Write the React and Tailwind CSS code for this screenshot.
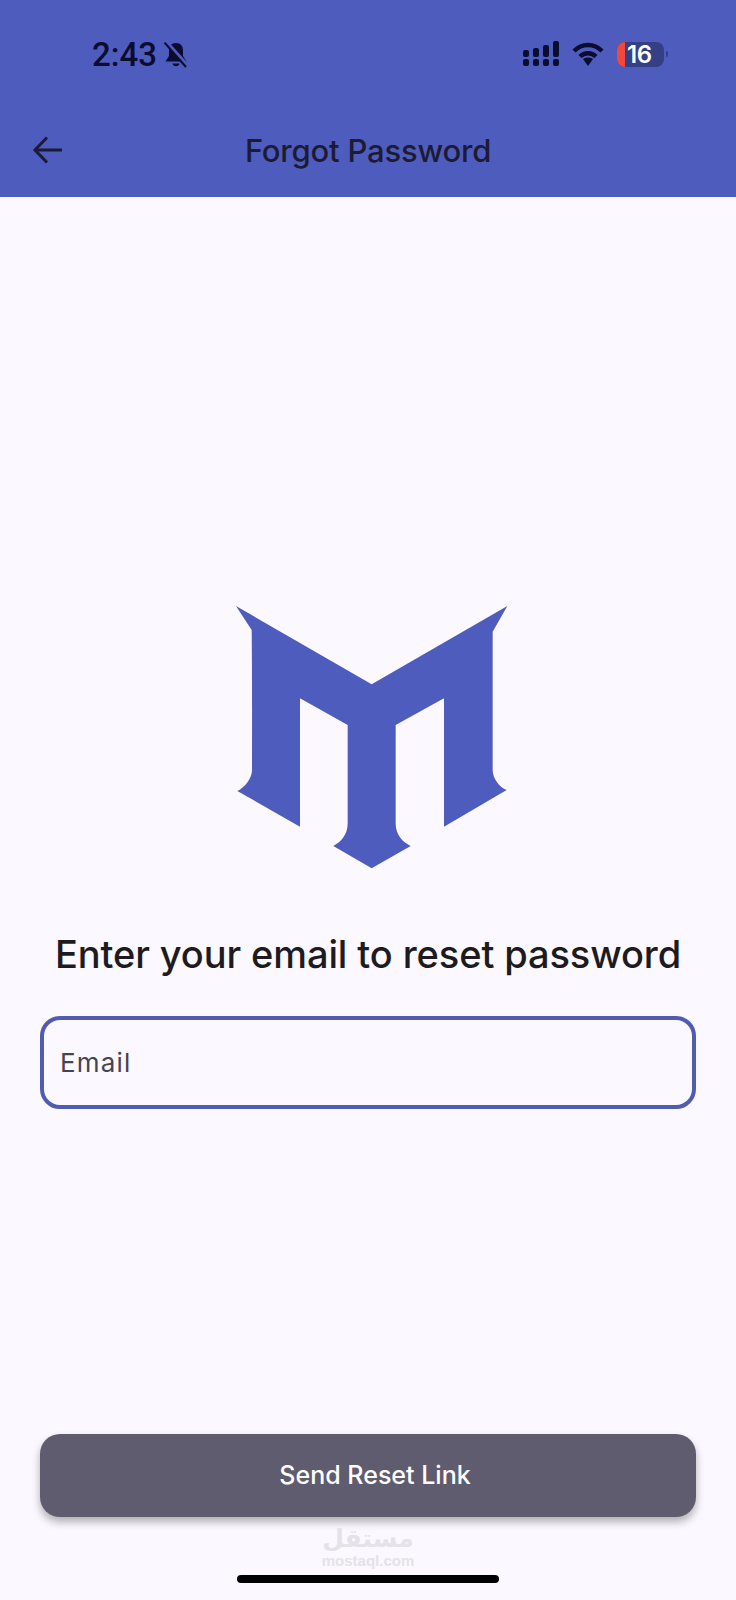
const LOGO = "M48 48 L95 120 C97 300 96 450 96 540 C96 565 75 592 52 603 L240 710 L240 325 L383 405 L383 700 C383 735 362 757 340 768 L455 835 L572 768 C548 757 527 735 527 700 L527 405 L672 325 L672 710 L860 600 C838 592 818 565 818 540 L818 125 L862 48 L455 283 Z";

function Bell() {
  return (
    <svg width="26" height="26" viewBox="0 0 26 26" className="ml-[6px] mt-[1px]">
      <path d="M13 1c-4.800 0-7 3.200-7 7.500v5.500L2.500 19.500h21L20 14V8.500C20 4.200 17.800 1 13 1z" fill="#0b0d30" />
      <path d="M9.500 21.500a3.600 3.600 0 0 0 7 0z" fill="#0b0d30" />
      <path d="M3.500 0.500 L25 24.500" stroke="#4e5cbd" strokeWidth="4" />
      <path d="M1.500 0.500 L23 25" stroke="#0b0d30" strokeWidth="2" />
    </svg>
  );
}

function Signal() {
  return (
    <svg width="36" height="26" viewBox="0 0 36 26" fill="#0b0d30">
      <rect x="0" y="9" width="6" height="7" rx="2" />
      <rect x="10" y="7" width="6" height="9" rx="2" />
      <rect x="20" y="4" width="6" height="12" rx="2" />
      <rect x="30" y="0" width="6" height="16" rx="2" />
      <rect x="0" y="18" width="6" height="7" rx="2" />
      <rect x="10" y="18" width="6" height="7" rx="2" />
      <rect x="20" y="18" width="6" height="7" rx="2" />
      <rect x="30" y="18" width="6" height="7" rx="2" />
    </svg>
  );
}

function Wifi() {
  return (
    <svg width="32" height="24" viewBox="0 0 32 24" fill="none" stroke="#0b0d30" strokeWidth="4.500">
      <path d="M2 9 C10 1 22 1 30 9" />
      <path d="M8 14.500 C12.500 10 19.500 10 24 14.500" />
      <path d="M11 17 L16 24 L21 17 C18 15 14 15 11 17 Z" fill="#0b0d30" stroke="none" />
    </svg>
  );
}

function Battery() {
  return (
    <div className="flex items-center">
      <div className="flex h-[25px] w-[47px] rounded-[8px] bg-[#353f85]">
        <div className="h-full w-[8px] rounded-l-[8px] bg-[#f0483a]" />
        <div className="flex flex-1 items-center pl-[2px] text-[24px] font-semibold leading-[25px] tracking-[-0.5px] text-white font-['Inter',sans-serif]">16</div>
      </div>
      <div className="ml-[2px] h-[6px] w-[2px] rounded-r bg-[#353f85]" />
    </div>
  );
}

export default function App() {
  return (
    <div className="flex h-[1600px] w-[736px] flex-col overflow-hidden bg-[#fcf8ff] font-['Inter',sans-serif]">
      <header className="h-[197px] bg-[#4e5cbd]">
        <div className="flex h-[108px] items-center justify-between pl-[92px] pr-[68px]">
          <div className="flex items-center">
            <span className="text-[33px] font-medium leading-none text-[#0b0d30] font-['Roboto',sans-serif]">2:43</span>
            <Bell />
          </div>
          <div className="flex items-center">
            <Signal />
            <div className="ml-[13px] mr-[13px] flex"><Wifi /></div>
            <Battery />
          </div>
        </div>
        <div className="relative flex h-[89px] items-center justify-center pb-[4px]">
          <svg className="absolute left-[32px] top-[27px]" width="30" height="30" viewBox="0 0 30 30" fill="none" stroke="#1c1b33" strokeWidth="3">
            <path d="M30 15 H3" />
            <path d="M15 2.500 L3 15 L15 27.500" />
          </svg>
          <h1 className="text-[31px] font-medium leading-none tracking-[-0.2px] text-[#1c1b33]">Forgot Password</h1>
        </div>
      </header>

      <main className="flex flex-1 flex-col items-center px-[40px]">
        <svg className="ml-[4px] mt-[393px] shrink-0" width="300" height="290" viewBox="0 0 900 870">
          <path d={LOGO} fill="#4e5cbd" />
        </svg>
        <h2 className="mt-[52px] h-[44px] whitespace-nowrap text-[38px] font-medium leading-[44px] tracking-[-0.1px] text-[#1d1b20]">Enter your email to reset password</h2>
        <input
          placeholder="Email"
          readOnly
          className="mt-[40px] h-[93px] w-full rounded-[20px] border-[4px] border-[#4f5cb0] bg-transparent px-[16px] text-[26px] tracking-[1.2px] outline-none placeholder:text-[#46444f]"
        />
        <button className="mt-[325px] h-[83px] w-full rounded-[20px] bg-[#5f5c6f] pl-[14px] pt-[1px] text-[25px] font-medium text-white shadow-[0_5px_8px_rgba(0,0,0,0.3)]">Send Reset Link</button>
        <div className="mt-[8px] flex flex-col items-center text-[#e4e3e8]">
          <span className="h-[28px] text-[25px] font-bold leading-[28px] font-['DejaVu_Sans',sans-serif]">مستقل</span>
          <span className="text-[15px] font-bold leading-[15px] font-['Liberation_Sans',sans-serif]">mostaql.com</span>
        </div>
        <div className="mt-[7px] h-[8px] w-[262px] rounded-full bg-black" />
      </main>
    </div>
  );
}
